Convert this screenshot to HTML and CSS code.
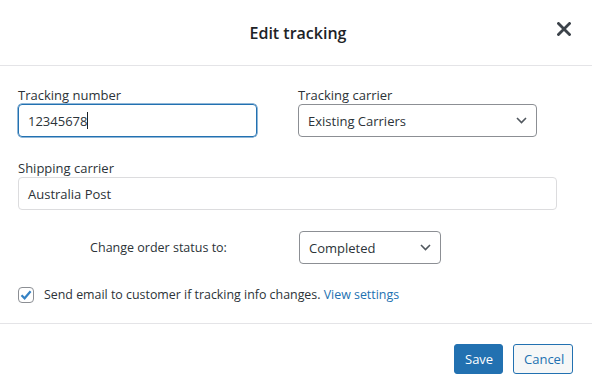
FILE: index.html
```html
<!DOCTYPE html>
<html lang="en">
<head>
    <meta charset="UTF-8">
    <meta name="viewport" content="width=device-width, initial-scale=1.0">
    <title>Edit tracking</title>
    <link rel="stylesheet" href="styles.css">
</head>
<body>
    <div class="modal">
        <div class="modal-header">
            <h1>Edit tracking</h1>
            <button class="close-btn" aria-label="Close">
                <svg width="14" height="14" viewBox="0 0 14 14">
                    <path d="M1.5 1.5 L12.5 12.5 M12.5 1.5 L1.5 12.5" stroke="#3c434a" stroke-width="2.8" stroke-linecap="square"/>
                </svg>
            </button>
        </div>

        <div class="modal-body">
            <div class="row-two">
                <div class="field">
                    <label>Tracking number</label>
                    <div class="input focused">12345678<span class="caret"></span></div>
                </div>
                <div class="field">
                    <label>Tracking carrier</label>
                    <div class="select">
                        <span>Existing Carriers</span>
                        <svg class="chevron" width="11" height="7" viewBox="0 0 11 7">
                            <path d="M1 1 L5.5 5.5 L10 1" fill="none" stroke="#50575e" stroke-width="1.6"/>
                        </svg>
                    </div>
                </div>
            </div>

            <div class="field wide">
                <label>Shipping carrier</label>
                <div class="input light">Australia Post</div>
            </div>

            <div class="status-row">
                <span class="status-label">Change order status to:</span>
                <div class="select small">
                    <span>Completed</span>
                    <svg class="chevron" width="11" height="7" viewBox="0 0 11 7">
                        <path d="M1 1 L5.5 5.5 L10 1" fill="none" stroke="#50575e" stroke-width="1.6"/>
                    </svg>
                </div>
            </div>

            <div class="check-row">
                <span class="checkbox">
                    <svg width="14" height="14" viewBox="0 0 14 14">
                        <path d="M2.5 7.2 L5.6 10.3 L11.6 3.2" fill="none" stroke="#3582c4" stroke-width="2.2"/>
                    </svg>
                </span>
                <span>Send email to customer if tracking info changes. <a href="#">View settings</a></span>
            </div>
        </div>

        <div class="modal-footer">
            <button class="btn btn-primary">Save</button>
            <button class="btn btn-secondary">Cancel</button>
        </div>
    </div>
</body>
</html>
```

FILE: styles.css
```css
body {
    margin: 0;
    background: #fff;
    font-family: "Open Sans", "Noto Sans", Arial, sans-serif;
    font-size: 13px;
    color: #2c3338;
}
.modal {
    width: 592px;
    height: 386px;
    background: #fff;
}
.modal-header {
    height: 65px;
    border-bottom: 1px solid #e4e4e7;
    display: flex;
    align-items: center;
    justify-content: center;
    position: relative;
}
.modal-header h1 {
    margin: 0;
    font-size: 16px;
    font-weight: 600;
    color: #1d2327;
    padding-left: 4px;
}
.close-btn {
    position: absolute;
    right: 21px;
    top: 22px;
    width: 14px;
    height: 14px;
    padding: 0;
    border: none;
    background: none;
    display: flex;
}
.modal-body {
    padding: 20px 18px 0 18px;
    height: 237px;
    border-bottom: 1px solid #e4e4e7;
}
.row-two {
    display: flex;
    gap: 41px;
}
.field label {
    display: block;
    line-height: 18px;
    color: #2c3338;
}
.row-two .field {
    width: 239px;
}
.field.wide {
    margin-top: 22px;
    width: 539px;
}
.input {
    box-sizing: border-box;
    height: 33px;
    border: 1px solid #8c8f94;
    border-radius: 4px;
    padding: 0 9px;
    display: flex;
    align-items: center;
    font-size: 13px;
    color: #2c3338;
}
.input.focused {
    border-color: #2271b1;
    box-shadow: 0 0 0 0.5px #2271b1;
}
.input.light {
    border-color: #dcdcde;
}
.caret {
    display: inline-block;
    width: 1px;
    height: 17px;
    background: #1d2327;
}
.select {
    box-sizing: border-box;
    height: 33px;
    border: 1px solid #8c8f94;
    border-radius: 4px;
    padding: 0 9px 0 9px;
    display: flex;
    align-items: center;
    justify-content: space-between;
    font-size: 13px;
    color: #2c3338;
}
.status-row {
    display: flex;
    align-items: center;
    margin-top: 21px;
}
.status-label {
    width: 281px;
    text-align: center;
    font-size: 12.5px;
}
.select.small {
    width: 142px;
    height: 33px;
}
.check-row {
    display: flex;
    align-items: center;
    gap: 10px;
    margin-top: 22px;
    font-size: 12.4px;
}
.checkbox {
    box-sizing: border-box;
    width: 16px;
    height: 16px;
    border: 1px solid #8c8f94;
    border-radius: 4px;
    display: flex;
    align-items: center;
    justify-content: center;
}
.check-row a {
    color: #2271b1;
    text-decoration: none;
}
.modal-footer {
    display: flex;
    justify-content: flex-end;
    gap: 10px;
    padding: 20px 19px 0 0;
}
.btn {
    box-sizing: border-box;
    height: 30px;
    padding: 0 10px;
    border-radius: 3px;
    font-family: inherit;
    font-size: 13px;
    border: 1px solid #2271b1;
}
.btn-primary {
    background: #2271b1;
    color: #fff;
    width: 49px;
}
.btn-secondary {
    background: #f6f7f7;
    color: #2271b1;
    width: 60px;
}
```
